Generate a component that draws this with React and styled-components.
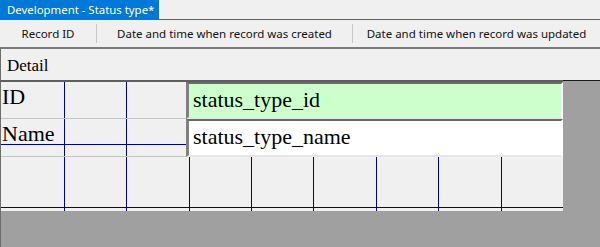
import React from 'react';
import styled, { createGlobalStyle } from 'styled-components';

const GlobalStyle = createGlobalStyle`
  html, body {
    margin: 0;
    padding: 0;
    background: #a0a0a0;
    overflow: hidden;
  }
`;

const Window = styled.div`
  width: 600px;
  height: 247px;
  display: flex;
  flex-direction: column;
  background: #a0a0a0;
`;

const TabStrip = styled.div`
  display: flex;
  height: 19px;
  background: #f0f0f0;
  border-bottom: 1px solid #0078d7;
`;

const Tab = styled.div`
  display: flex;
  align-items: center;
  padding: 0 5px 0 7px;
  background: #0078d7;
  color: #fff;
  font-family: "Noto Sans", "Open Sans", sans-serif;
  font-size: 11.4px;
  white-space: nowrap;
`;

const Toolbar = styled.div`
  display: flex;
  align-items: center;
  height: 27px;
  background: #f0f0f0;
`;

const ToolCell = styled.div`
  width: ${p => (p.$w ? `${p.$w}px` : 'auto')};
  flex: ${p => (p.$w ? 'none' : '1')};
  text-align: center;
  font-family: "Noto Sans", "Open Sans", sans-serif;
  font-size: 11.5px;
  color: #111;
  white-space: nowrap;
`;

const Separator = styled.div`
  width: 1px;
  height: 19px;
  background: #c8c8c8;
`;

const SectionBar = styled.div`
  height: 35px;
  box-sizing: border-box;
  padding: 7px 6px 0;
  background: #f0f0f0;
  border-top: 2px solid #7a7a7a;
  border-bottom: 2px solid #5f5f5f;
  border-left: 1px solid #6d6d6d;
  font-family: "Liberation Serif", "Times New Roman", serif;
  font-size: 17px;
  color: #000;
`;

const Designer = styled.div`
  display: flex;
  flex: 1;
  border-left: 1px solid #6d6d6d;
`;

// grid lines of the design surface, in px from the canvas corner
const gridColor = '#00008f';
const gridX = [63, 125, 188, 250, 312, 375, 437, 500];
const gridY = [62, 125];
const solid = `linear-gradient(${gridColor}, ${gridColor})`;
const gridImages = [...gridX, ...gridY].map(() => solid).join(', ');
const gridSizes = [...gridX.map(() => '1px 100%'), ...gridY.map(() => '100% 1px')].join(', ');
const gridPositions = [...gridX.map(x => `${x}px 0`), ...gridY.map(y => `0 ${y}px`)].join(', ');

const Canvas = styled.div`
  width: 562px;
  height: 129px;
  display: flex;
  flex-direction: column;
  background-color: #f0f0f0;
  background-image: ${gridImages};
  background-size: ${gridSizes};
  background-position: ${gridPositions};
  background-repeat: no-repeat;
`;

const FieldRow = styled.div`
  display: flex;
  height: ${p => p.$h}px;
`;

const FieldLabel = styled.div`
  width: 185px;
  box-sizing: border-box;
  padding: 2px 0 0 1px;
  border-bottom: 1px solid #c4c4c4;
  font-family: "Liberation Serif", "Times New Roman", serif;
  font-size: 22px;
  color: #000;
`;

const TextBox = styled.div`
  flex: 1;
  box-sizing: border-box;
  padding: 3px 0 0 4px;
  background: ${p => p.$bg || '#fff'};
  border-top: 2px solid #696969;
  border-left: 3px solid #808080;
  border-right: 2px solid #fff;
  border-bottom: 2px solid #e6e6e6;
  font-family: "Liberation Serif", "Times New Roman", serif;
  font-size: 22px;
  color: #000;
  white-space: nowrap;
`;

const Filler = styled.div`
  flex: 1;
  background: #a0a0a0;
  border-top: 1px solid #1a1a1a;
  margin-top: -2px;
`;

const App = () => {
  return (
    <Window>
      <GlobalStyle />
      <TabStrip>
        <Tab>Development - Status type*</Tab>
      </TabStrip>
      <Toolbar>
        <ToolCell $w={96}>Record ID</ToolCell>
        <Separator />
        <ToolCell $w={255}>Date and time when record was created</ToolCell>
        <Separator />
        <ToolCell>Date and time when record was updated</ToolCell>
      </Toolbar>
      <SectionBar>Detail</SectionBar>
      <Designer>
        <Canvas>
          <FieldRow $h={37}>
            <FieldLabel>ID</FieldLabel>
            <TextBox $bg="#ccffcc">status_type_id</TextBox>
          </FieldRow>
          <FieldRow $h={38}>
            <FieldLabel>Name</FieldLabel>
            <TextBox>status_type_name</TextBox>
          </FieldRow>
        </Canvas>
        <Filler />
      </Designer>
    </Window>
  );
};

export default App;
